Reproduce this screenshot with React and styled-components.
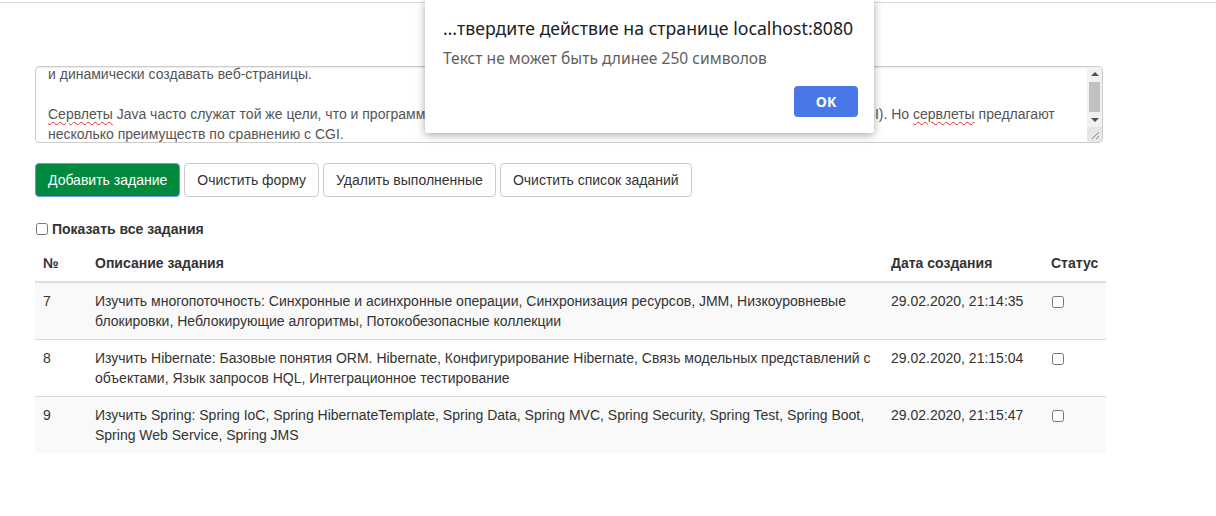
import React from "react";
import styled, { createGlobalStyle } from "styled-components";

const GlobalStyle = createGlobalStyle`
  html, body {
    margin: 0;
    padding: 0;
    background: #fff;
  }
  body {
    font-family: "Liberation Sans", Arial, sans-serif;
    font-size: 14px;
    line-height: 20px;
    color: #333;
  }
  * {
    box-sizing: border-box;
  }
`;

const tasks = [
  {
    id: 7,
    text: "Изучить многопоточность: Синхронные и асинхронные операции, Синхронизация ресурсов, JMM, Низкоуровневые блокировки, Неблокирующие алгоритмы, Потокобезопасные коллекции",
    created: "29.02.2020, 21:14:35",
  },
  {
    id: 8,
    text: "Изучить Hibernate: Базовые понятия ORM. Hibernate, Конфигурирование Hibernate, Связь модельных представлений с объектами, Язык запросов HQL, Интеграционное тестирование",
    created: "29.02.2020, 21:15:04",
  },
  {
    id: 9,
    text: "Изучить Spring: Spring IoC, Spring HibernateTemplate, Spring Data, Spring MVC, Spring Security, Spring Test, Spring Boot, Spring Web Service, Spring JMS",
    created: "29.02.2020, 21:15:47",
  },
];

const App = () => {
  return (
    <>
      <GlobalStyle />
      <Page>
        <TopEdge />
        <Main>
          <TextBox>
            <TextContent>
              <Line>и динамически создавать веб-страницы.</Line>
              <Line>&nbsp;</Line>
              <Line>
                <Typo>Сервлеты</Typo> Java часто служат той же цели, что и
                программы, реализованные с использованием Common Gateway
                Interface (CGI). Но <Typo>сервлеты</Typo> предлагают
              </Line>
              <Line>несколько преимуществ по сравнению с CGI.</Line>
            </TextContent>
            <ScrollBar>
              <Arrow $up />
              <Track>
                <Thumb />
              </Track>
              <Arrow />
              <Grip>
                <svg width="10" height="10" viewBox="0 0 10 10">
                  <path d="M9 2 L2 9 M9 6 L6 9" stroke="#888" strokeWidth="1" />
                </svg>
              </Grip>
            </ScrollBar>
          </TextBox>

          <Toolbar>
            <Button $primary>Добавить задание</Button>
            <Button>Очистить форму</Button>
            <Button>Удалить выполненные</Button>
            <Button>Очистить список заданий</Button>
          </Toolbar>

          <ShowAll>
            <input type="checkbox" />
            Показать все задания
          </ShowAll>

          <Table>
            <colgroup>
              <col style={{ width: 52 }} />
              <col style={{ width: 796 }} />
              <col style={{ width: 160 }} />
              <col style={{ width: 63 }} />
            </colgroup>
            <thead>
              <tr>
                <th>№</th>
                <th>Описание задания</th>
                <th>Дата создания</th>
                <th>Статус</th>
              </tr>
            </thead>
            <tbody>
              {tasks.map((t) => (
                <tr key={t.id}>
                  <td>{t.id}</td>
                  <td>{t.text}</td>
                  <td>{t.created}</td>
                  <td>
                    <StatusBox type="checkbox" />
                  </td>
                </tr>
              ))}
            </tbody>
          </Table>
        </Main>

        <Dialog>
          <DialogTitle>…твердите действие на странице localhost:8080</DialogTitle>
          <DialogMessage>Текст не может быть длинее 250 символов</DialogMessage>
          <DialogActions>
            <OkButton>OK</OkButton>
          </DialogActions>
        </Dialog>
      </Page>
    </>
  );
};

const Page = styled.div`
  position: relative;
  width: 1216px;
  min-height: 516px;
`;

const TopEdge = styled.div`
  height: 3px;
  border-bottom: 1px solid #dad8e2;
`;

const Main = styled.div`
  width: 1106px;
  padding: 63px 0 0 35px;
`;

const TextBox = styled.div`
  display: flex;
  width: 1068px;
  height: 77px;
  border: 1px solid #ccc;
  border-radius: 4px;
  box-shadow: inset 0 1px 1px rgba(0, 0, 0, 0.075);
  overflow: hidden;
  color: #555;
`;

const TextContent = styled.div`
  flex: 1;
  padding: 0 12px;
  margin-top: -3px;
`;

const Line = styled.div`
  white-space: nowrap;
  line-height: 20px;
`;

const Typo = styled.span`
  text-decoration: underline wavy #e03030;
  text-decoration-thickness: 1px;
  text-underline-offset: 2px;
`;

const ScrollBar = styled.div`
  width: 15px;
  display: flex;
  flex-direction: column;
  background: #f1f1f1;
`;

const Arrow = styled.div`
  height: 14px;
  display: flex;
  align-items: center;
  justify-content: center;
  &::before {
    content: "";
    border-left: 4px solid transparent;
    border-right: 4px solid transparent;
    ${(p) =>
      p.$up
        ? "border-bottom: 4px solid #505050;"
        : "border-top: 4px solid #505050;"}
  }
`;

const Track = styled.div`
  flex: 1;
  padding: 1px 2px;
`;

const Thumb = styled.div`
  height: 30px;
  background: #c1c1c1;
`;

const Grip = styled.div`
  height: 15px;
  background: #e6e6e6;
  display: flex;
  align-items: flex-end;
  justify-content: flex-end;
  padding: 0 2px 2px 0;
  svg {
    display: block;
  }
`;

const Toolbar = styled.div`
  display: flex;
  gap: 4px;
  margin-top: 20px;
`;

const Button = styled.button`
  font-family: "Liberation Sans", Arial, sans-serif;
  font-size: 14px;
  line-height: 20px;
  padding: 6px 12px;
  border-radius: 4px;
  border: 1px solid ${(p) => (p.$primary ? "#6f93e0" : "#ccc")};
  background: ${(p) => (p.$primary ? "#008a3e" : "#fff")};
  color: ${(p) => (p.$primary ? "#fff" : "#333")};
  cursor: pointer;
`;

const ShowAll = styled.label`
  display: flex;
  align-items: center;
  gap: 4px;
  margin-top: 22px;
  font-weight: bold;
  line-height: 20px;
  input {
    margin: 0 0 0 1px;
    width: 12px;
    height: 12px;
  }
`;

const Table = styled.table`
  width: 1071px;
  margin-top: 6px;
  border-collapse: collapse;
  table-layout: fixed;
  th,
  td {
    padding: 8px;
    text-align: left;
    vertical-align: top;
    line-height: 20px;
  }
  th {
    font-weight: bold;
    border-bottom: 2px solid #ddd;
  }
  td {
    border-top: 1px solid #ddd;
  }
  tbody tr:nth-child(odd) {
    background: #f9f9f9;
  }
`;

const StatusBox = styled.input`
  margin: 5px 0 0 1px;
  width: 12px;
  height: 12px;
`;

const Dialog = styled.div`
  position: absolute;
  left: 425px;
  top: 0;
  width: 449px;
  height: 133px;
  background: #fff;
  border-radius: 0 0 2px 2px;
  box-shadow: 0 2px 8px rgba(0, 0, 0, 0.35);
  padding: 14px 16px 16px 18px;
  font-family: "Noto Sans", "Open Sans", sans-serif;
`;

const DialogTitle = styled.div`
  font-size: 17.7px;
  line-height: 28px;
  color: #202124;
  white-space: nowrap;
`;

const DialogMessage = styled.div`
  margin-top: 4px;
  font-size: 15.6px;
  line-height: 24px;
  color: #5f5f5f;
  white-space: nowrap;
`;

const DialogActions = styled.div`
  display: flex;
  justify-content: flex-end;
  margin-top: 16px;
`;

const OkButton = styled.button`
  width: 64px;
  height: 31px;
  border: none;
  border-radius: 4px;
  background: #4a77e8;
  color: #fff;
  font-family: "Noto Sans", "Open Sans", sans-serif;
  font-weight: bold;
  font-size: 14px;
  cursor: pointer;
`;

export default App;
